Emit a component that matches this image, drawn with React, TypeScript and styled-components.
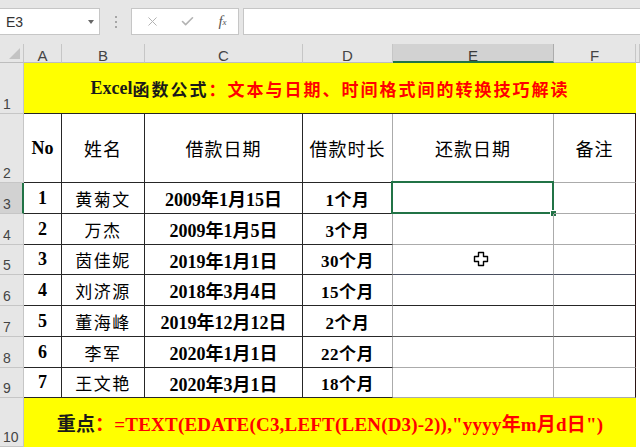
import { Fragment } from "react"
import styled, { createGlobalStyle } from "styled-components"
import { X, Check } from "lucide-react"

const DARK = "#262626"
const GRAY = "#ababab"
const EDGE = "#2b1414"
const GREEN = "#217346"

const GlobalStyle = createGlobalStyle`
  html, body {
    margin: 0;
    padding: 0;
    background: #fff;
    overflow: hidden;
  }
  body {
    font-family: "Liberation Serif", "Noto Sans CJK SC", serif;
  }
`

const Window = styled.div`
  width: 640px;
  height: 447px;
  overflow: hidden;
  background: #fff;
`

const Toolbar = styled.div`
  display: flex;
  align-items: flex-start;
  height: 44px;
  padding-top: 8px;
  box-sizing: border-box;
  background: #e6e6e6;
`

const NameBox = styled.div`
  width: 100px;
  height: 27px;
  box-sizing: border-box;
  background: #fff;
  border: 1px solid #c6c6c6;
  border-left: none;
  display: flex;
  align-items: center;
  justify-content: space-between;
  padding: 0 5px 0 6px;
  font: 14px "Liberation Sans", sans-serif;
  color: #333;
`

const Caret = styled.span`
  width: 0;
  height: 0;
  border-left: 3.5px solid transparent;
  border-right: 3.5px solid transparent;
  border-top: 4px solid #666;
`

const Grip = styled.div`
  width: 31px;
  height: 27px;
  display: flex;
  flex-direction: column;
  align-items: center;
  justify-content: center;
  gap: 3px;
`

const Dot = styled.span`
  width: 2px;
  height: 2px;
  background: #a6a6a6;
`

const FormulaButtons = styled.div`
  width: 108px;
  height: 27px;
  box-sizing: border-box;
  background: #fff;
  border: 1px solid #c6c6c6;
  display: grid;
  grid-template-columns: repeat(3, 35px);
  padding-left: 3px;
  align-items: center;
  justify-items: center;
  color: #b3b3b3;
`

const Fx = styled.span`
  font: italic 15px "Liberation Serif", serif;
  color: #555;
  sub {
    font-size: 9px;
    vertical-align: 1px;
  }
`

const FormulaInput = styled.div`
  flex: 1;
  margin-left: 4px;
  height: 27px;
  box-sizing: border-box;
  background: #fff;
  border: 1px solid #c6c6c6;
  border-right: none;
`

const Sheet = styled.div`
  display: grid;
  grid-template-columns: 24px 38px 83px 158px 90px 161px 82px 4px;
  grid-template-rows: 19px 51px 69px 31px 31px 30px 31px 31px 31px 30px 49px;
`

const Corner = styled.div`
  position: relative;
  background: #e6e6e6;
  border-right: 1px solid #c6c6c6;
  border-bottom: 1px solid #bdbdbd;
  box-sizing: border-box;
  &::after {
    content: "";
    position: absolute;
    right: 3px;
    bottom: 3px;
    border-left: 11px solid transparent;
    border-bottom: 11px solid #c3c3c3;
  }
`

const ColHead = styled.div<{ $active?: boolean }>`
  box-sizing: border-box;
  background: ${(p) => (p.$active ? "#d2d2d2" : "#e6e6e6")};
  border-right: 1px solid ${(p) => (p.$active ? "#acacac" : "#c6c6c6")};
  border-bottom: ${(p) => (p.$active ? `2px solid ${GREEN}` : "1px solid #bdbdbd")};
  padding-top: 3px;
  line-height: 16px;
  text-align: center;
  font: 15px "Liberation Sans", sans-serif;
  color: ${(p) => (p.$active ? "#3a3a3a" : "#444")};
`

const RowHead = styled.div<{ $active?: boolean }>`
  box-sizing: border-box;
  background: ${(p) => (p.$active ? "#d2d2d2" : "#e6e6e6")};
  border-right: ${(p) => (p.$active ? `2px solid ${GREEN}` : "1px solid #c6c6c6")};
  border-bottom: 1px solid #c6c6c6;
  display: flex;
  align-items: flex-end;
  padding: 0 0 1px 3px;
  font: 14px "Liberation Sans", sans-serif;
  line-height: 16px;
  color: #444;
`

const Banner = styled.div<{ $size: number; $line?: string }>`
  grid-column: span 6;
  box-sizing: border-box;
  background: #ffff00;
  border-bottom: ${(p) => (p.$line ? `1px solid ${p.$line}` : "none")};
  display: flex;
  align-items: center;
  justify-content: center;
  font-size: ${(p) => p.$size}px;
  font-weight: bold;
  color: #1a1a1a;
  white-space: nowrap;
`

const Latin = styled.span`
  font-size: 18px;
  letter-spacing: 0;
`

const Han = styled.span<{ $spacing: number }>`
  letter-spacing: ${(p) => p.$spacing}px;
`

const Red = styled.span`
  color: #ff0000;
`

const Cell = styled.div<{
  $right: string
  $bottom: string
  $size?: number
  $bold?: boolean
  $spacing?: number
}>`
  position: relative;
  box-sizing: border-box;
  border-right: 1px solid ${(p) => p.$right};
  border-bottom: 1px solid ${(p) => p.$bottom};
  display: flex;
  align-items: center;
  justify-content: center;
  font-size: ${(p) => p.$size ?? 17}px;
  font-weight: ${(p) => (p.$bold ? "bold" : "normal")};
  letter-spacing: ${(p) => p.$spacing ?? 0}px;
  color: #000;
  white-space: nowrap;
`

const Filler = styled.div``

const Selection = styled.div`
  position: absolute;
  left: -2px;
  top: -2px;
  right: -1px;
  bottom: -1px;
  border: 2px solid ${GREEN};
  pointer-events: none;
  &::after {
    content: "";
    position: absolute;
    right: -5px;
    bottom: -5px;
    width: 5px;
    height: 5px;
    background: ${GREEN};
    border: 1px solid #fff;
  }
`

const Cursor = styled.svg`
  position: absolute;
  left: 80px;
  top: 6px;
`

interface Loan {
  no: number
  name: string
  date: string
  span: string
  line: string
}

const loans: Loan[] = [
  { no: 1, name: "黄菊文", date: "2009年1月15日", span: "1个月", line: GRAY },
  { no: 2, name: "万杰", date: "2009年1月5日", span: "3个月", line: GRAY },
  { no: 3, name: "茵佳妮", date: "2019年1月1日", span: "30个月", line: "#4a5060" },
  { no: 4, name: "刘济源", date: "2018年3月4日", span: "15个月", line: DARK },
  { no: 5, name: "董海峰", date: "2019年12月12日", span: "2个月", line: "#555" },
  { no: 6, name: "李军", date: "2020年1月1日", span: "22个月", line: GRAY },
  { no: 7, name: "王文艳", date: "2020年3月1日", span: "18个月", line: GRAY },
]

const columns = ["A", "B", "C", "D", "E", "F"]

const App = () => {
  return (
    <Window>
      <GlobalStyle />
      <Toolbar>
        <NameBox>
          E3
          <Caret />
        </NameBox>
        <Grip>
          <Dot />
          <Dot />
          <Dot />
        </Grip>
        <FormulaButtons>
          <X size={15} strokeWidth={1.6} />
          <Check size={15} strokeWidth={2.6} />
          <Fx>
            f<sub>x</sub>
          </Fx>
        </FormulaButtons>
        <FormulaInput />
      </Toolbar>

      <Sheet>
        <Corner />
        {columns.map((c) => (
          <ColHead key={c} $active={c === "E"}>
            {c}
          </ColHead>
        ))}
        <ColHead />

        <RowHead>1</RowHead>
        <Banner $size={17} $line={DARK}>
          <Latin>Excel</Latin>
          <Han $spacing={2}>函数公式</Han>
          <Red>
            <Han $spacing={2}>：文本与日期、时间格式间的转换技巧解读</Han>
          </Red>
        </Banner>
        <Filler />

        <RowHead>2</RowHead>
        <Cell $right={DARK} $bottom={DARK} $size={18} $bold>
          No
        </Cell>
        <Cell $right={DARK} $bottom={DARK} $size={18} $spacing={1}>
          姓名
        </Cell>
        <Cell $right={DARK} $bottom={DARK} $size={18} $spacing={1}>
          借款日期
        </Cell>
        <Cell $right={GRAY} $bottom={DARK} $size={18} $spacing={1}>
          借款时长
        </Cell>
        <Cell $right={GRAY} $bottom={GRAY} $size={18} $spacing={1}>
          还款日期
        </Cell>
        <Cell $right={EDGE} $bottom={GRAY} $size={18} $spacing={1}>
          备注
        </Cell>
        <Filler />

        {loans.map((l, i) => (
          <Fragment key={l.no}>
            <RowHead $active={i === 0}>{l.no + 2}</RowHead>
            <Cell $right={DARK} $bottom={DARK} $size={18} $bold>
              {l.no}
            </Cell>
            <Cell $right={DARK} $bottom={DARK} $spacing={1.5}>
              {l.name}
            </Cell>
            <Cell $right={DARK} $bottom={DARK} $size={18} $bold>
              {l.date}
            </Cell>
            <Cell $right={GRAY} $bottom={DARK} $bold $spacing={0.5}>
              {l.span}
            </Cell>
            <Cell $right={GRAY} $bottom={l.line}>
              {i === 0 && <Selection />}
              {i === 2 && (
                <Cursor width="16" height="16" viewBox="0 0 16 16">
                  <path
                    d="M5.5 1.5h5v4h4v5h-4v4h-5v-4h-4v-5h4z"
                    fill="#fff"
                    stroke="#000"
                    strokeWidth="1.4"
                    strokeLinejoin="round"
                  />
                </Cursor>
              )}
            </Cell>
            <Cell $right={EDGE} $bottom={l.line} />
            <Filler />
          </Fragment>
        ))}

        <RowHead>10</RowHead>
        <Banner $size={19}>
          <Han $spacing={0.2}>重点</Han>
          <Red>
            <Han $spacing={0.2}>：=TEXT(EDATE(C3,LEFT(LEN(D3)-2)),"yyyy年m月d日")</Han>
          </Red>
        </Banner>
        <Filler />
      </Sheet>
    </Window>
  )
}

export default App
